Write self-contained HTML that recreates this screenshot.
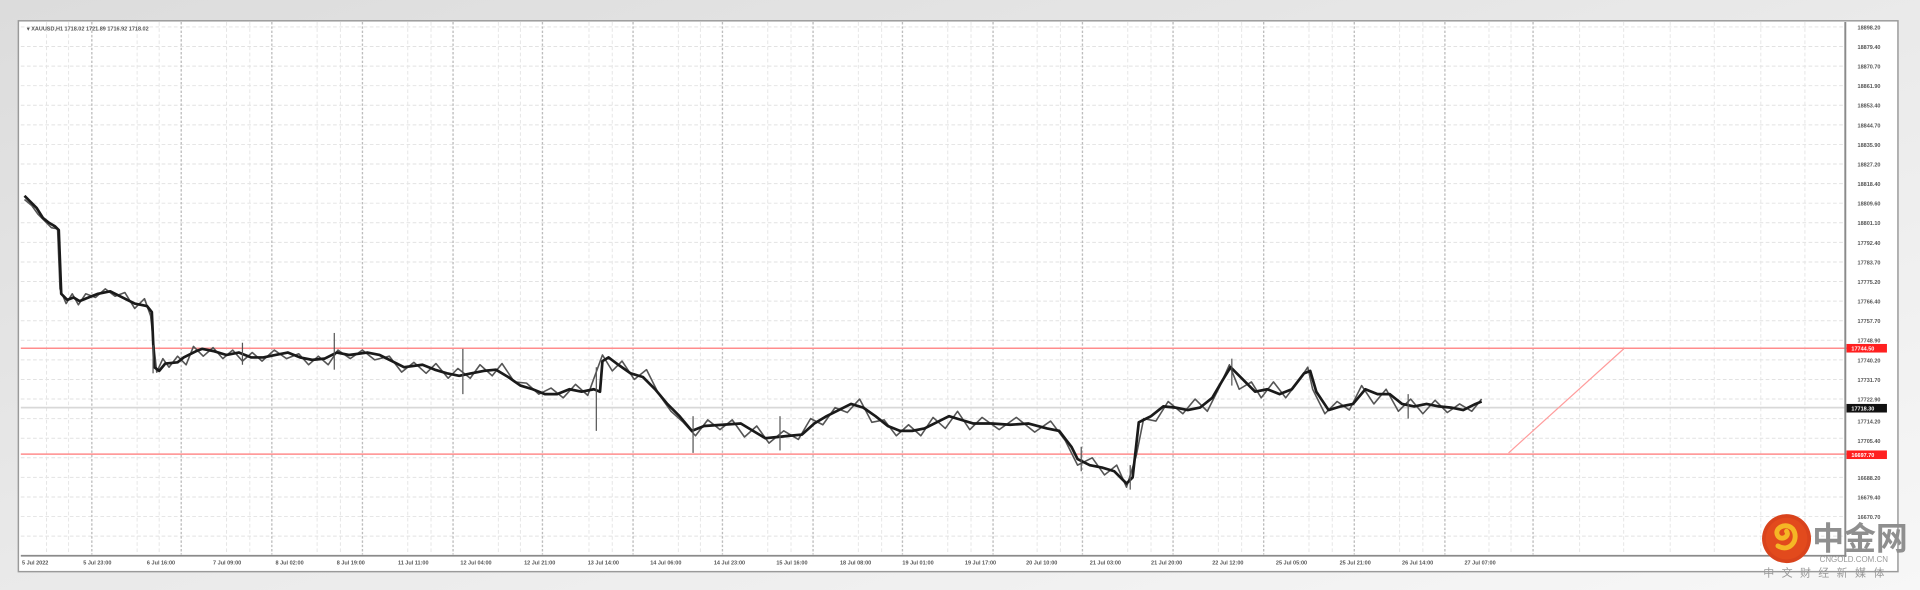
<!DOCTYPE html>
<html><head><meta charset="utf-8"><style>
html,body{margin:0;padding:0;width:1920px;height:590px;overflow:hidden;background:linear-gradient(#dedede,#ececec 60%,#f6f6f6);}
svg{display:block}
</style></head><body>
<svg width="1920" height="590" viewBox="0 0 1568 482" preserveAspectRatio="none" xmlns="http://www.w3.org/2000/svg" font-family="Liberation Sans, sans-serif">
<defs>
<linearGradient id="bg" x1="0" y1="0" x2="1" y2="1"><stop offset="0" stop-color="#dcdcdc"/><stop offset="1" stop-color="#f7f7f7"/></linearGradient>
</defs>
<rect width="1568" height="482" fill="url(#bg)"/>
<rect x="15" y="17" width="1535" height="450" fill="#ffffff" stroke="#9a9a9a" stroke-width="1.2"/>
<g stroke="#e2e2e2" stroke-width="0.8" stroke-dasharray="3,2">
<line x1="17" y1="22" x2="1507" y2="22"/><line x1="17" y1="38" x2="1507" y2="38"/><line x1="17" y1="54" x2="1507" y2="54"/><line x1="17" y1="70" x2="1507" y2="70"/><line x1="17" y1="86" x2="1507" y2="86"/><line x1="17" y1="102" x2="1507" y2="102"/><line x1="17" y1="118" x2="1507" y2="118"/><line x1="17" y1="134" x2="1507" y2="134"/><line x1="17" y1="150" x2="1507" y2="150"/><line x1="17" y1="166" x2="1507" y2="166"/><line x1="17" y1="182" x2="1507" y2="182"/><line x1="17" y1="198" x2="1507" y2="198"/><line x1="17" y1="214" x2="1507" y2="214"/><line x1="17" y1="230" x2="1507" y2="230"/><line x1="17" y1="246" x2="1507" y2="246"/><line x1="17" y1="262" x2="1507" y2="262"/><line x1="17" y1="278" x2="1507" y2="278"/><line x1="17" y1="294" x2="1507" y2="294"/><line x1="17" y1="310" x2="1507" y2="310"/><line x1="17" y1="326" x2="1507" y2="326"/><line x1="17" y1="342" x2="1507" y2="342"/><line x1="17" y1="358" x2="1507" y2="358"/><line x1="17" y1="374" x2="1507" y2="374"/><line x1="17" y1="390" x2="1507" y2="390"/><line x1="17" y1="406" x2="1507" y2="406"/><line x1="17" y1="422" x2="1507" y2="422"/><line x1="17" y1="438" x2="1507" y2="438"/>
</g>
<g stroke="#e6e6e6" stroke-width="0.8" stroke-dasharray="3,2">
<line x1="38" y1="18" x2="38" y2="453"/><line x1="56" y1="18" x2="56" y2="453"/><line x1="112" y1="18" x2="112" y2="453"/><line x1="130" y1="18" x2="130" y2="453"/><line x1="185" y1="18" x2="185" y2="453"/><line x1="204" y1="18" x2="204" y2="453"/><line x1="259" y1="18" x2="259" y2="453"/><line x1="278" y1="18" x2="278" y2="453"/><line x1="333" y1="18" x2="333" y2="453"/><line x1="352" y1="18" x2="352" y2="453"/><line x1="407" y1="18" x2="407" y2="453"/><line x1="425" y1="18" x2="425" y2="453"/><line x1="481" y1="18" x2="481" y2="453"/><line x1="500" y1="18" x2="500" y2="453"/><line x1="554" y1="18" x2="554" y2="453"/><line x1="572" y1="18" x2="572" y2="453"/><line x1="627" y1="18" x2="627" y2="453"/><line x1="646" y1="18" x2="646" y2="453"/><line x1="701" y1="18" x2="701" y2="453"/><line x1="720" y1="18" x2="720" y2="453"/><line x1="774" y1="18" x2="774" y2="453"/><line x1="793" y1="18" x2="793" y2="453"/><line x1="847" y1="18" x2="847" y2="453"/><line x1="866" y1="18" x2="866" y2="453"/><line x1="921" y1="18" x2="921" y2="453"/><line x1="940" y1="18" x2="940" y2="453"/><line x1="995" y1="18" x2="995" y2="453"/><line x1="1014" y1="18" x2="1014" y2="453"/><line x1="1069" y1="18" x2="1069" y2="453"/><line x1="1088" y1="18" x2="1088" y2="453"/><line x1="1143" y1="18" x2="1143" y2="453"/><line x1="1162" y1="18" x2="1162" y2="453"/><line x1="1216" y1="18" x2="1216" y2="453"/><line x1="1234" y1="18" x2="1234" y2="453"/><line x1="1290" y1="18" x2="1290" y2="453"/><line x1="1326" y1="18" x2="1326" y2="453"/><line x1="1364" y1="18" x2="1364" y2="453"/><line x1="1400" y1="18" x2="1400" y2="453"/><line x1="1438" y1="18" x2="1438" y2="453"/><line x1="1474" y1="18" x2="1474" y2="453"/>
</g>
<g stroke="#bdbdbd" stroke-width="1.1" stroke-dasharray="2,1.5">
<line x1="75" y1="18" x2="75" y2="453"/><line x1="148" y1="18" x2="148" y2="453"/><line x1="222" y1="18" x2="222" y2="453"/><line x1="296" y1="18" x2="296" y2="453"/><line x1="370" y1="18" x2="370" y2="453"/><line x1="443" y1="18" x2="443" y2="453"/><line x1="517" y1="18" x2="517" y2="453"/><line x1="590" y1="18" x2="590" y2="453"/><line x1="664" y1="18" x2="664" y2="453"/><line x1="737" y1="18" x2="737" y2="453"/><line x1="811" y1="18" x2="811" y2="453"/><line x1="884" y1="18" x2="884" y2="453"/><line x1="958" y1="18" x2="958" y2="453"/><line x1="1032" y1="18" x2="1032" y2="453"/><line x1="1106" y1="18" x2="1106" y2="453"/><line x1="1180" y1="18" x2="1180" y2="453"/><line x1="1252" y1="18" x2="1252" y2="453"/>
</g>
<line x1="17" y1="333" x2="1507" y2="333" stroke="#d8d8d8" stroke-width="1.5"/>
<line x1="17" y1="284.5" x2="1510" y2="284.5" stroke="#ff8c8c" stroke-width="1.3"/>
<line x1="17" y1="371" x2="1510" y2="371" stroke="#ff8c8c" stroke-width="1.3"/>
<line x1="1232" y1="370" x2="1326" y2="285" stroke="#ff9c9c" stroke-width="1"/>
<line x1="1507" y1="18" x2="1507" y2="455" stroke="#8a8a8a" stroke-width="1.6"/>
<line x1="17" y1="454" x2="1508" y2="454" stroke="#8a8a8a" stroke-width="1.4"/>
<polyline fill="none" stroke="#555" stroke-width="1.3" stroke-linejoin="round" points="20,163 26,168 31,175 37,181 42,186 47,187 49,236 54,248 59,240 64,249 70,240 78,243 86,236 94,242 102,239 110,252 118,244 123,258 128,304 133,293 138,300 145,291 152,298 158,283 166,291 174,284 182,293 190,286 198,295 206,288 214,295 224,286 234,293 244,289 252,298 260,291 268,298 276,286 286,293 296,286 306,294 318,291 328,304 338,296 348,305 356,297 366,309 374,301 384,309 392,298 402,307 410,297 420,312 430,313 440,322 450,317 460,325 470,314 480,323 492,290 500,303 508,295 518,310 528,302 538,322 548,336 558,345 568,356 578,343 588,351 598,343 608,357 618,348 628,362 640,352 652,359 662,342 672,347 682,333 692,337 702,326 712,345 722,343 732,356 742,347 752,356 762,341 772,350 782,336 792,351 802,341 816,351 830,341 845,353 858,344 870,360 880,380 892,374 902,388 912,380 920,398 928,372 934,342 944,344 954,328 966,338 976,326 986,336 996,316 1004,298 1012,318 1022,312 1030,325 1040,312 1050,325 1060,312 1068,300 1072,318 1082,338 1092,328 1102,335 1112,315 1122,330 1132,318 1142,336 1152,326 1162,338 1172,327 1182,337 1192,330 1202,336 1210,326"/>
<polyline fill="none" stroke="#1a1a1a" stroke-width="2.2" stroke-linejoin="round" points="20,160 25,165 30,170 35,178 40,182 45,185 48,188 50,240 55,245 60,243 65,246 70,244 80,240 90,238 100,243 110,248 120,250 124,255 126,300 130,303 135,297 145,296 150,292 160,287 165,285 175,287 185,290 195,288 205,292 215,292 225,290 235,288 245,292 255,294 265,293 275,288 285,290 300,288 310,290 320,295 330,300 345,298 355,302 365,305 375,307 385,305 395,303 405,302 415,308 425,315 435,318 445,322 455,322 465,318 475,320 485,318 490,320 492,295 497,292 505,298 515,305 525,308 535,318 545,330 555,340 565,352 575,348 590,347 605,346 615,352 625,358 635,357 645,356 655,355 665,346 675,340 685,335 695,330 705,333 715,340 725,348 735,352 745,352 755,350 765,345 775,340 785,343 795,346 810,346 825,347 840,346 855,350 865,352 875,365 880,375 890,380 900,382 910,385 920,395 925,390 930,345 940,340 950,332 960,333 970,335 980,333 990,325 1000,308 1005,300 1015,310 1025,320 1035,318 1045,322 1055,318 1065,305 1070,303 1075,320 1085,335 1095,332 1105,330 1115,318 1125,322 1135,322 1145,330 1155,332 1165,330 1175,332 1185,333 1195,335 1205,330 1210,328"/>
<g stroke="#555" stroke-width="1">
<line x1="125" y1="282" x2="125" y2="305"/><line x1="198" y1="280" x2="198" y2="298"/><line x1="273" y1="272" x2="273" y2="302"/><line x1="378" y1="285" x2="378" y2="322"/><line x1="487" y1="300" x2="487" y2="352"/><line x1="566" y1="340" x2="566" y2="370"/><line x1="637" y1="340" x2="637" y2="368"/><line x1="883" y1="365" x2="883" y2="385"/><line x1="923" y1="380" x2="923" y2="400"/><line x1="1006" y1="293" x2="1006" y2="315"/><line x1="1150" y1="322" x2="1150" y2="342"/>
</g>
<g font-size="4.5" fill="#555" font-weight="bold">
<text x="1517" y="24">18898.20</text><text x="1517" y="40">18879.40</text><text x="1517" y="56">18870.70</text><text x="1517" y="72">18861.90</text><text x="1517" y="88">18853.40</text><text x="1517" y="104">18844.70</text><text x="1517" y="120">18835.90</text><text x="1517" y="136">18827.20</text><text x="1517" y="152">18818.40</text><text x="1517" y="168">18809.60</text><text x="1517" y="184">18801.10</text><text x="1517" y="200">17792.40</text><text x="1517" y="216">17783.70</text><text x="1517" y="232">17775.20</text><text x="1517" y="248">17766.40</text><text x="1517" y="264">17757.70</text><text x="1517" y="280">17748.90</text><text x="1517" y="296">17740.20</text><text x="1517" y="312">17731.70</text><text x="1517" y="328">17722.90</text><text x="1517" y="346">17714.20</text><text x="1517" y="362">17705.40</text><text x="1517" y="392">16688.20</text><text x="1517" y="408">16679.40</text><text x="1517" y="424">16670.70</text>
</g>
<rect x="1508" y="281" width="33" height="7" fill="#ff2020"/>
<rect x="1508" y="368" width="33" height="7" fill="#ff2020"/>
<rect x="1508" y="330" width="33" height="7" fill="#111"/>
<g font-size="4.5" fill="#fff" font-weight="bold"><text x="1512" y="286.5">17744.50</text><text x="1512" y="373.5">16697.70</text><text x="1512" y="335.5">17718.30</text></g>
<text x="22" y="25" font-size="4.5" fill="#555" font-weight="bold">▾ XAUUSD,H1  1718.02 1721.89 1716.92 1718.02</text>
<g font-size="4.5" fill="#555" font-weight="bold">
<text x="18" y="461">5 Jul 2022</text><text x="68" y="461">5 Jul 23:00</text><text x="120" y="461">6 Jul 16:00</text><text x="174" y="461">7 Jul 09:00</text><text x="225" y="461">8 Jul 02:00</text><text x="275" y="461">8 Jul 19:00</text><text x="325" y="461">11 Jul 11:00</text><text x="376" y="461">12 Jul 04:00</text><text x="428" y="461">12 Jul 21:00</text><text x="480" y="461">13 Jul 14:00</text><text x="531" y="461">14 Jul 06:00</text><text x="583" y="461">14 Jul 23:00</text><text x="634" y="461">15 Jul 16:00</text><text x="686" y="461">18 Jul 08:00</text><text x="737" y="461">19 Jul 01:00</text><text x="788" y="461">19 Jul 17:00</text><text x="838" y="461">20 Jul 10:00</text><text x="890" y="461">21 Jul 03:00</text><text x="940" y="461">21 Jul 20:00</text><text x="990" y="461">22 Jul 12:00</text><text x="1042" y="461">25 Jul 05:00</text><text x="1094" y="461">25 Jul 21:00</text><text x="1145" y="461">26 Jul 14:00</text><text x="1196" y="461">27 Jul 07:00</text>
</g>
<circle cx="1459" cy="440" r="20" fill="#d9431c"/>
<circle cx="1459" cy="440" r="17" fill="#e24a1d"/>
<path d="M1452,446 C1462,452 1470,440 1464,432 C1458,426 1448,432 1452,438 C1455,442 1462,438 1459,434" fill="none" stroke="#f5b625" stroke-width="4" stroke-linecap="round"/>
<text x="1480" y="449" font-size="26" font-weight="bold" fill="#8f8f8f" font-family="Liberation Sans, 'Noto Sans CJK SC', sans-serif">中金网</text>
<text x="1486" y="459" font-size="6.5" fill="#999">CNGOLD.COM.CN</text>
<text x="1440" y="471" font-size="9" fill="#999" letter-spacing="6" font-family="Liberation Sans, 'Noto Sans CJK SC', sans-serif">中文财经新媒体</text>
</svg>
</body></html>
